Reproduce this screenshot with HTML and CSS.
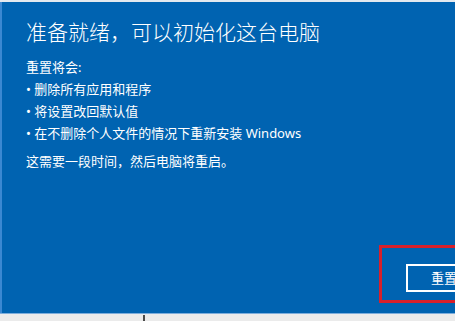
FILE: index.html
```html
<!DOCTYPE html>
<html lang="zh-CN">
<head>
<meta charset="utf-8">
<title>重置此电脑</title>
<link rel="stylesheet" href="styles.css">
</head>
<body>
<div class="screen">
  <div class="topline"></div>
  <div class="dialog">
    <h1 class="title">准备就绪，可以初始化这台电脑</h1>
    <div class="info">
      <p class="line">重置将会:</p>
      <p class="line">• 删除所有应用和程序</p>
      <p class="line">• 将设置改回默认值</p>
      <p class="line">• 在不删除个人文件的情况下重新安装 Windows</p>
    </div>
    <p class="note">这需要一段时间，然后电脑将重启。</p>
    <div class="actions">
      <div class="highlight">
        <button class="btn">重置</button>
      </div>
    </div>
  </div>
  <div class="edge"></div>
  <div class="taskbar"><span class="divider"></span></div>
</div>
</body>
</html>
```
FILE: styles.css
```css
html, body {
  margin: 0;
  padding: 0;
  background: #e8e8e8;
}
.screen {
  width: 455px;
  height: 321px;
  overflow: hidden;
  display: flex;
  flex-direction: column;
  font-family: "Noto Sans", "Noto Sans CJK SC", sans-serif;
  color: #ffffff;
}
.topline {
  height: 2px;
  flex: none;
  background: #e3e9ef;
}
.dialog {
  flex: 1 1 auto;
  min-height: 0;
  display: flex;
  flex-direction: column;
  background: #0063b1;
  border-left: 2px solid #3b88d2;
  padding: 15px 0 10px 24px;
}
.title {
  margin: 0;
  font-family: "Noto Sans CJK SC", sans-serif;
  font-size: 21px;
  font-weight: 300;
  line-height: 28px;
  white-space: nowrap;
}
.info {
  margin-top: 11px;
}
.line, .note {
  margin: 0;
  font-size: 13px;
  line-height: 22px;
  white-space: nowrap;
}
.note {
  margin-top: 6px;
}
.actions {
  margin-top: auto;
  display: flex;
  padding-left: 353px;
}
.highlight {
  flex: none;
  border: 3px solid #d8202b;
  padding: 16px 0 8px 24px;
  width: 120px;
}
.btn {
  font-family: "Noto Sans", "Noto Sans CJK SC", sans-serif;
  font-size: 13px;
  line-height: 22px;
  height: 28px;
  color: #ffffff;
  background: transparent;
  border: 2px solid #ffffff;
  padding: 0 23px;
  margin: 0;
  min-width: 100px;
  text-align: left;
}
.edge {
  height: 1px;
  flex: none;
  background: #7eaedc;
}
.taskbar {
  flex: none;
  height: 7px;
  display: flex;
  align-items: flex-end;
  padding-left: 143px;
  background: #ebebeb;
}
.divider {
  width: 2px;
  height: 6px;
  background: #4a4a4a;
}
```
